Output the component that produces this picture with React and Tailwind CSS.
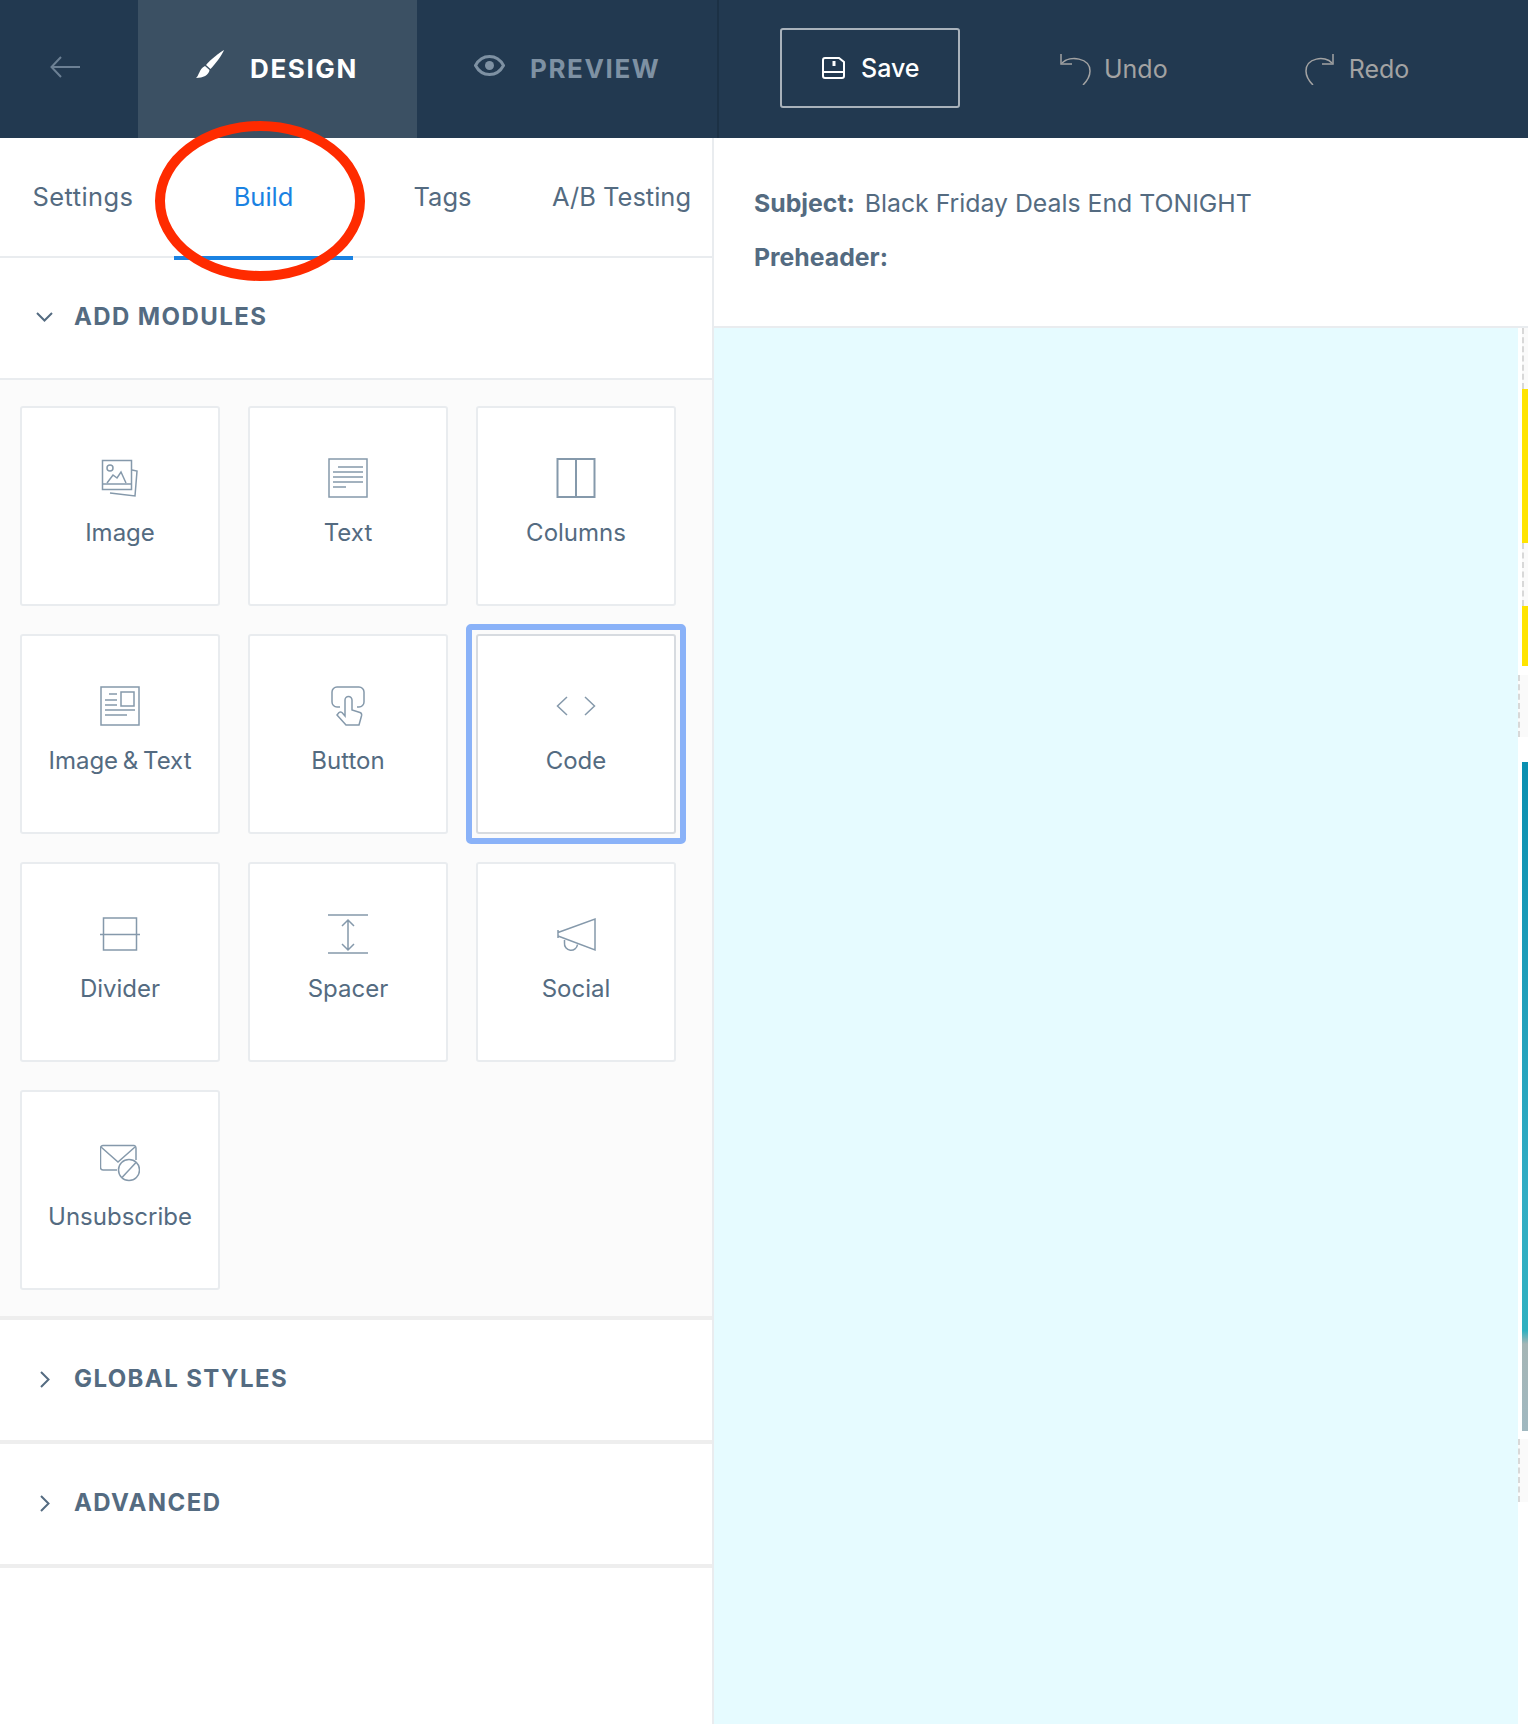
import { Fragment } from "react";

const Glyph = ({ children }) => (
  <svg width="40" height="40" viewBox="0 0 40 40" fill="none" stroke="#8599ab" strokeWidth="1.5">
    {children}
  </svg>
);

const modules = [
  {
    label: "Image",
    icon: (
      <>
        <rect x="2.5" y="2.5" width="29" height="29" />
        <path d="M2.5 26h29" />
        <circle cx="10" cy="10" r="3" />
        <path d="M7 25l6-8 4 3 4-6 5 11" />
        <path d="M32 12l5 1-2 25-25-3" />
      </>
    ),
  },
  {
    label: "Text",
    icon: (
      <>
        <rect x="1" y="1" width="38" height="38" />
        <path d="M10 9h25M5 14h30M5 19h30M5 24h30M5 29h13" />
      </>
    ),
  },
  {
    label: "Columns",
    icon: (
      <>
        <rect x="1.5" y="1" width="37" height="38" strokeWidth="2" />
        <path d="M20 1v38" strokeWidth="2" />
      </>
    ),
  },
  {
    label: "Image & Text",
    icon: (
      <>
        <rect x="1" y="1" width="38" height="38" />
        <rect x="21" y="6" width="13" height="14" />
        <path d="M9 8h8M5 14h12M5 19h12M5 24h30M5 29h22" />
      </>
    ),
  },
  {
    label: "Button",
    icon: (
      <>
        <path d="M12 21H9a5 5 0 0 1-5-5V6a5 5 0 0 1 5-5h22a5 5 0 0 1 5 5v10a5 5 0 0 1-5 5h-2" />
        <path d="M17 30V14a3.5 3.5 0 0 1 7 0v10l8 2.5q2 .7 1.6 3L31 39H18L9 29l2-2.500q1.500-1 3 0z" />
      </>
    ),
  },
  {
    label: "Code",
    icon: (
      <>
        <path d="M11 11l-9.500 9 9.500 9M29 11l9.500 9-9.500 9" />
      </>
    ),
  },
  {
    label: "Divider",
    icon: (
      <>
        <rect x="3.500" y="4" width="33" height="32" />
        <path d="M0 20.500h40" />
      </>
    ),
  },
  {
    label: "Spacer",
    icon: (
      <>
        <path d="M0 1h40M0 39h40M20 6v30M14 12l6-6 6 6M14 30l6 6 6-6" />
      </>
    ),
  },
  {
    label: "Social",
    icon: (
      <>
        <path d="M2 16v8M2 18.500L39 5v31L2 22" />
        <path d="M8.500 26v3a6.500 6.500 0 0 0 13 1.500" />
      </>
    ),
  },
  {
    label: "Unsubscribe",
    icon: (
      <>
        <path d="M17 28H3a2.500 2.500 0 0 1-2.500-2.500V6A2.500 2.500 0 0 1 3 3.500h31A2.500 2.500 0 0 1 36 6v12" />
        <path d="M1 5l17 15L35 5" />
        <circle cx="29" cy="28" r="10.500" />
        <path d="M22 35.500l14-15" />
      </>
    ),
  },
];

function ModuleCard({ label, icon, selected }) {
  return (
    <div
      className={
        "relative flex h-[200px] w-[200px] flex-col items-center rounded-[3px] border-2 bg-white pt-[50px] " +
        (selected ? "border-[#d7dbe0]" : "border-[#e9ecef]")
      }
    >
      {selected && (
        <div className="absolute -inset-[12px] rounded-[5px] border-[6px] border-[#8ab2f8]" />
      )}
      <Glyph>{icon}</Glyph>
      <span className="mt-[20px] text-[24px] leading-[30px] text-[#546b81] [word-spacing:-2px]">{label}</span>
    </div>
  );
}

function Section({ open, title }) {
  return (
    <div className="flex h-[120px] items-center pb-[2px] pl-[36px]">
      {open ? (
        <svg width="17" height="10" viewBox="0 0 17 10" fill="none" stroke="#546b81" strokeWidth="2">
          <path d="M1 1l7.500 7.500L16 1" />
        </svg>
      ) : (
        <svg className="ml-[4px]" width="10" height="17" viewBox="0 0 10 17" fill="none" stroke="#546b81" strokeWidth="2">
          <path d="M1 1l7.500 7.500L1 16" />
        </svg>
      )}
      <span className={(open ? "ml-[21px]" : "ml-[24px]") + " text-[24px] font-bold tracking-[1.4px] text-[#546b81]"}>
        {title}
      </span>
    </div>
  );
}

function EmailStrip() {
  const dashed = "border-l-2 border-dashed border-[#d8d8d8] bg-[#fafafa]";
  return (
    <div className="flex w-[10px] flex-col bg-white">
      <div className={"ml-[4px] h-[61px] " + dashed} />
      <div className="ml-[4px] h-[154px] bg-[#ffe400]" />
      <div className={"ml-[4px] h-[63px] " + dashed} />
      <div className="ml-[4px] h-[60px] bg-[#ffe400]" />
      <div className={"mt-[9px] h-[62px] " + dashed} />
      <div className="ml-[4px] mt-[25px] h-[669px] bg-[linear-gradient(#0a8fb0_0%,#32adc4_65%,#2fb0c0_85%,#a5b5b5_87%,#a0b8c0_100%)]" />
      <div className={"mt-[8px] h-[63px] " + dashed} />
    </div>
  );
}

export default function App() {
  return (
    <div className="relative flex h-[1724px] w-[1528px] flex-col overflow-hidden bg-white font-['Inter',sans-serif]">
      {/* top bar */}
      <header className="flex h-[138px] items-center bg-[#223950]">
        <div className="flex h-full w-[138px] items-center pl-[50px]">
          <svg className="-mt-[5px]" width="30" height="22" viewBox="0 0 30 22" fill="none" stroke="#6c8094" strokeWidth="2">
            <path d="M30 11H2M11 1L1.500 11 11 21" />
          </svg>
        </div>
        <div className="flex h-full w-[279px] items-center gap-[26px] bg-[#3b5063] pb-[2px] pl-[58px]">
          <svg className="-mt-[8px]" width="28" height="28" viewBox="0 0 28 28" fill="#fff">
            <path d="M28 0C26 5 20 13 14.500 19L10 15C15 9 23 3 28 0Z" />
            <path d="M9 16l4.500 4C13 25 7 28 0 28 3 26 3 19 9 16Z" />
          </svg>
          <span className="text-[26px] font-bold tracking-[1.6px] text-white">DESIGN</span>
        </div>
        <div className="flex h-full w-[302px] items-center gap-[25px] border-r-2 border-[#1c3145] pb-[2px] pl-[57px]">
          <svg className="-mt-[6px]" width="31" height="21" viewBox="0 0 31 21" fill="none" stroke="#7e91a3" strokeWidth="3">
            <path d="M1.500 10.500C5 4 10 1.500 15.500 1.500S26 4 29.500 10.500C26 17 21 19.500 15.500 19.500S5 17 1.500 10.500Z" />
            <circle cx="15.500" cy="10.500" r="4.500" fill="#7e91a3" stroke="none" />
          </svg>
          <span className="text-[26px] font-bold tracking-[1.6px] text-[#7e91a3]">PREVIEW</span>
        </div>
        <button className="-mt-[2px] ml-[61px] flex h-[80px] w-[180px] items-center gap-[16px] rounded-[3px] border-2 border-[#a9b2bb] pl-[40px] text-[25px] font-medium text-white">
          <svg width="23" height="22" viewBox="0 0 23 22" fill="none" stroke="#fff" strokeWidth="2">
            <path d="M3 1h14l5 4v14a2 2 0 0 1-2 2H3a2 2 0 0 1-2-2V3a2 2 0 0 1 2-2Z" />
            <path d="M1 15h21" />
            <path d="M12 4v5" strokeWidth="3" />
          </svg>
          <span className="mt-[2px]">Save</span>
        </button>
        <div className="ml-[100px] flex items-center gap-[13px] text-[25px] text-[#a3a3a3]">
          <svg width="31" height="32" viewBox="0 0 31 32" fill="none" stroke="#a3a3a3" strokeWidth="1.500">
            <path d="M1 1v10h11" />
            <path d="M2 10C10 2 30 5 30 18c0 6-3 10-7 14" />
          </svg>
          <span className="mt-[2px]">Undo</span>
        </div>
        <div className="ml-[137px] flex items-center gap-[15px] text-[25px] text-[#a3a3a3]">
          <svg width="29" height="32" viewBox="0 0 29 32" fill="none" stroke="#a3a3a3" strokeWidth="1.500">
            <path d="M28 1v10H17" />
            <path d="M27 10C20 2 1 5 1 18c0 6 3 10 7 14" />
          </svg>
          <span className="mt-[2px]">Redo</span>
        </div>
      </header>

      <div className="flex flex-1">
        {/* left panel */}
        <aside className="flex w-[714px] flex-col border-r-2 border-[#e9ecef]">
          <nav className="flex h-[120px] items-start border-b-2 border-[#e9ecef] text-[25.500px] text-[#546b81]">
            <span className="flex h-[118px] w-[174px] items-center justify-center pr-[8px] tracking-[0.4px]">Settings</span>
            <span className="flex h-[118px] w-[179px] items-center justify-center border-y-4 border-b-[#1a82e2] border-t-transparent text-[#1a82e2] box-content -mt-[4px]">Build</span>
            <span className="flex h-[118px] w-[179px] items-center justify-center">Tags</span>
            <span className="flex h-[118px] w-[179px] items-center justify-center">A/B Testing</span>
          </nav>
          <div className="border-b-2 border-[#e9ecef]">
            <Section open title="ADD MODULES" />
          </div>
          <div className="grid grid-cols-[repeat(3,200px)] gap-[28px] border-b-4 border-[#eeeeee] bg-[#fbfbfb] pb-[26px] pl-[20px] pt-[26px]">
            {modules.map((m) => (
              <Fragment key={m.label}>
                <ModuleCard label={m.label} icon={m.icon} selected={m.label === "Code"} />
              </Fragment>
            ))}
          </div>
          <div className="border-b-4 border-[#eeeeee]">
            <Section title="GLOBAL STYLES" />
          </div>
          <div className="border-b-4 border-[#eeeeee]">
            <Section title="ADVANCED" />
          </div>
        </aside>

        {/* email canvas */}
        <main className="flex flex-1 flex-col">
          <div className="flex h-[190px] flex-col gap-[26px] border-b-2 border-[#e9ecef] pl-[40px] pt-[51px] text-[24.800px] leading-[28px] text-[#546b81]">
            <div>
              <span className="font-bold">Subject:</span>
              <span className="ml-[10px]">Black Friday Deals End TONIGHT</span>
            </div>
            <div className="font-bold">Preheader:</div>
          </div>
          <div className="flex flex-1">
            <div className="flex-1 bg-[#e6fbff]" />
            <EmailStrip />
          </div>
        </main>
      </div>

      {/* red marker annotation */}
      <div className="absolute left-[155px] top-[121px] h-[160px] w-[210px] rounded-[50%] border-[10px] border-[#ff2b00]" />
    </div>
  );
}
